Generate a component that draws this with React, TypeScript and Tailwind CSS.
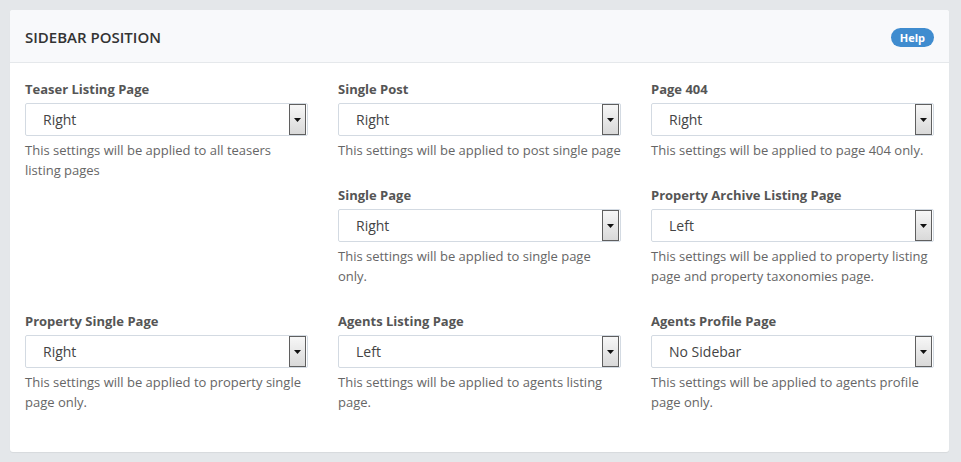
import { type ReactNode } from 'react';

interface Field {
  label: string;
  value: string;
  help: string;
  className?: string;
}

const FIELDS: Field[] = [
  {
    label: 'Teaser Listing Page',
    value: 'Right',
    help: 'This settings will be applied to all teasers listing pages',
    className: 'row-span-2',
  },
  { label: 'Single Post', value: 'Right', help: 'This settings will be applied to post single page' },
  { label: 'Page 404', value: 'Right', help: 'This settings will be applied to page 404 only.' },
  { label: 'Single Page', value: 'Right', help: 'This settings will be applied to single page only.' },
  {
    label: 'Property Archive Listing Page',
    value: 'Left',
    help: 'This settings will be applied to property listing page and property taxonomies page.',
  },
  {
    label: 'Property Single Page',
    value: 'Right',
    help: 'This settings will be applied to property single page only.',
  },
  { label: 'Agents Listing Page', value: 'Left', help: 'This settings will be applied to agents listing page.' },
  {
    label: 'Agents Profile Page',
    value: 'No Sidebar',
    help: 'This settings will be applied to agents profile page only.',
  },
];

function FakeSelect({ value }: { value: string }) {
  return (
    <div className="flex h-[33px] items-center rounded-[2px] border border-[#d3dae2] bg-white pr-px">
      <span className="flex-1 pl-[17px] text-[14px] text-[#444]">{value}</span>
      <span className="flex h-[31px] w-[17px] items-center justify-center border border-[#5f5f5f] bg-gradient-to-b from-[#f7f7f7] to-[#d9d9d9]">
        <svg width="7" height="4" viewBox="0 0 7 4">
          <path d="M0 0h7L3.5 4z" fill="#111" />
        </svg>
      </span>
    </div>
  );
}

function FieldBlock({ field }: { field: Field }): ReactNode {
  return (
    <div className={field.className}>
      <p className="mb-[4px] text-[13px] font-bold leading-[20px] text-[#555]">{field.label}</p>
      <FakeSelect value={field.value} />
      <p className="mt-[4px] text-[13px] leading-[20px] text-[#666]">{field.help}</p>
    </div>
  );
}

export default function App() {
  return (
    <div
      className="min-h-[462px] bg-[#e4e7ea] p-[10px] pr-[12px]"
      style={{ fontFamily: '"Open Sans", "Liberation Sans", sans-serif' }}
    >
      <div className="overflow-hidden rounded-[3px] bg-white shadow-[0_1px_1px_rgba(0,0,0,0.06)]">
        {/* Header */}
        <div className="flex h-[53px] items-center justify-between border-b border-[#e5e8eb] bg-[#f8f9fb] px-[15px] pt-[2px]">
          <h2 className="text-[15px] font-semibold uppercase text-[#333]">Sidebar Position</h2>
          <span className="rounded-full bg-[#3f8ccf] px-[9px] py-[2px] text-[11px] font-bold leading-[15px] text-white">
            Help
          </span>
        </div>

        {/* Fields */}
        <div className="grid grid-cols-3 gap-x-[30px] gap-y-[25px] px-[15px] pb-[40px] pt-[16px]">
          {FIELDS.map((f) => (
            <FieldBlock key={f.label} field={f} />
          ))}
        </div>
      </div>
    </div>
  );
}
